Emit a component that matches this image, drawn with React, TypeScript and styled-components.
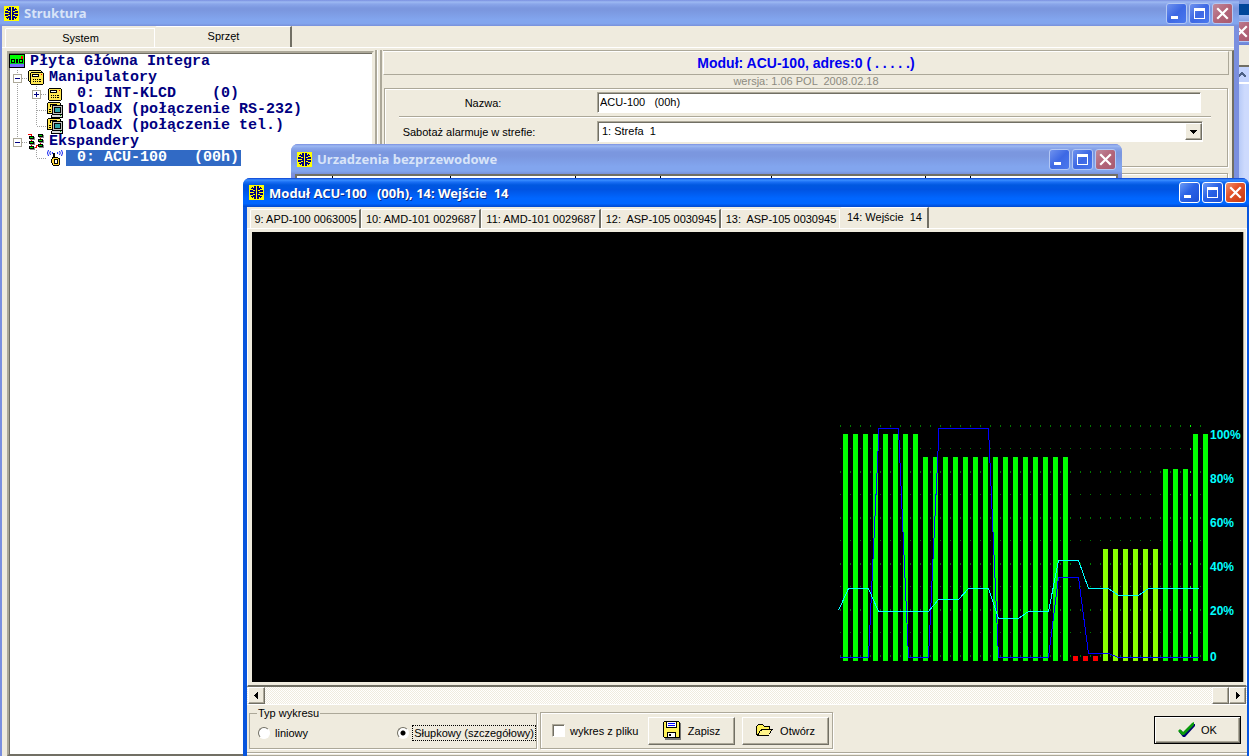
import React, { ReactNode, useState } from "react";
import styled, { createGlobalStyle, css } from "styled-components";

const face = "#efebde";
const shade = "#aca899";
const dark = "#716f64";
const ui = `"Liberation Sans", Arial, sans-serif`;

const GlobalStyle = createGlobalStyle`
  *, *::before, *::after { box-sizing: border-box; }
  html, body { margin: 0; height: 100%; }
  body { font: 11px/14px ${ui}; color: #000; background: #fff; overflow: hidden; }
  button, input, select { font: inherit; color: inherit; margin: 0; }
`;

const Desktop = styled.div`
  position: relative;
  min-height: 100vh;
  overflow: hidden;
  white-space: pre;
`;

type Tone = { $active?: boolean };

const Window = styled.section<Tone>`
  position: absolute;
  display: flex;
  flex-direction: column;
  background: ${(p) => (p.$active ? "#0855dd" : "#7a8fdf")};
  border-radius: 7px 7px 0 0;
  overflow: hidden;
`;

const BackWindow = styled(Window)`
  top: 0;
  right: -3px;
  bottom: 0;
  width: 240px;
  border-radius: 0;
`;

const StructureWindow = styled(Window)`
  top: 0;
  left: 0;
  right: 10px;
  bottom: 0;
  padding: 0 5px 0 2px;
  border-radius: 0;
`;

const WirelessWindow = styled(Window)`
  top: 144px;
  left: 291px;
  right: 127px;
  height: 60px;
  padding: 0 4px;
`;

const ModuleWindow = styled(Window)`
  top: 178px;
  left: 243px;
  right: 0;
  bottom: 0;
  padding: 0 2px 0 4px;
`;

const TitleBar = styled.header<Tone & { $height: number; $inset: number }>`
  flex: none;
  display: flex;
  align-items: center;
  gap: 5px;
  height: ${(p) => p.$height}px;
  margin: 0 -5px 0 -4px;
  padding: 2px ${(p) => p.$inset}px 2px 6px;
  background: ${(p) =>
    p.$active
      ? "linear-gradient(#0a3fd0 0, #3b8fff 2px, #1a6ff5 4px, #0058e0 7px, #0054e3 40%, #0066ff 70%, #0066ff 88%, #0048cf 100%)"
      : "linear-gradient(#7a8fe0 0, #9db9f2 2px, #8aa6ea 4px, #7b97df 8px, #7b97df 40%, #82a5ee 75%, #82a5ee 90%, #7890da 100%)"};
`;

const TitleText = styled.h1<Tone>`
  flex: 1;
  margin: 0;
  font: bold 13px/16px "Noto Sans", "Open Sans", sans-serif;
  color: ${(p) => (p.$active ? "#fff" : "#d8e4f8")};
  text-shadow: ${(p) => (p.$active ? "1px 1px 0 #0a2a8c" : "none")};
`;

const CaptionButtons = styled.div`
  display: flex;
  gap: 2px;
`;

const CaptionButton = styled.button<Tone & { $close?: boolean }>`
  display: block;
  width: 21px;
  height: 21px;
  padding: 0;
  border: 1px solid ${(p) => (p.$active ? "#fff" : "#b4c8f4")};
  border-radius: 3px;
  background: ${(p) =>
    p.$close
      ? p.$active
        ? "linear-gradient(135deg, #f0936f, #e4532a 40%, #c63a12)"
        : "linear-gradient(135deg, #c08a9c, #b36579 50%, #a85a70)"
      : p.$active
        ? "linear-gradient(135deg, #6c9bf5, #2a62e6 45%, #1c4fd6)"
        : "linear-gradient(135deg, #6f92ee, #3d68e4 50%, #4a78ee)"};
  svg { display: block; }
`;

const BackTop = styled.div`
  height: 15px;
  border-top: 4px solid #7b97df;
  background: #00469a;
`;

const BackTitle = styled.div`
  display: flex;
  justify-content: flex-end;
  align-items: center;
  height: 30px;
  padding-top: 2px;
  background: linear-gradient(#9db9f2, #7b97df 8px, #82a5ee 80%, #6a7fd4);
`;

const BackClient = styled.div`
  flex: 1;
  display: flex;
  flex-direction: column;
  align-items: flex-end;
  padding: 20px 3px 0 0;
  background: ${face};
`;

const BackScroll = styled.div`
  flex: 1;
  display: flex;
  flex-direction: column;
  width: 11px;
  border-top: 2px solid ${dark};
  background: linear-gradient(90deg, #b4c8f6, #cddafd 60%);
`;

const BackScrollButton = styled.button`
  height: 17px;
  padding: 0;
  border: 0;
  border-bottom: 2px solid #fff;
  background: #c3d3fd;
  svg { display: block; }
`;

const Client = styled.div`
  flex: 1;
  min-height: 0;
  display: flex;
  flex-direction: column;
  background: ${face};
`;

const Tabs = styled.div`
  flex: none;
  display: flex;
  align-items: flex-end;
  padding-left: 3px;
  height: 21px;
`;

const Tab = styled.button<Tone & { $width: number; $plain?: boolean }>`
  width: ${(p) => p.$width}px;
  height: 19px;
  padding: 0 1px 0 2px;
  border: 0;
  border-left: 1px solid #fff;
  border-top: 1px solid #fff;
  border-right: ${(p) => (p.$plain ? "1px solid #fff" : `2px solid ${dark}`)};
  border-radius: 2px 0 0 0;
  background: ${face};
  white-space: pre;
  ${(p) =>
    p.$active &&
    css`
      height: 21px;
      padding-bottom: 3px;
      border-left-color: ${face};
    `}
`;

const Split = styled.div`
  flex: 1;
  min-height: 0;
  display: flex;
  border-top: 1px solid #fff;
  padding: 3px 0 0 5px;
`;

const Tree = styled.ul`
  flex: 0 0 367px;
  margin: 0;
  padding: 1px 0 0;
  list-style: none;
  background: #fff;
  border: 2px solid ${dark};
  border-top-color: ${shade};
  border-left-color: ${shade};
  border-right-color: ${face};
  box-shadow: inset 1px 1px 0 ${dark};
`;

const TreeRow = styled.li`
  display: flex;
  height: 16px;
`;

const TreeLabel = styled.span<{ $selected?: boolean }>`
  margin-left: 3px;
  padding: 0 2px;
  font: bold 15px/16px "Liberation Mono", "Courier New", monospace;
  color: ${(p) => (p.$selected ? "#fff" : "#000080")};
  background: ${(p) => (p.$selected ? "#316ac5" : "transparent")};
`;

const Splitter = styled.div`
  flex: 0 0 7px;
  margin: -1px 1px 0;
  border-left: 2px solid ${shade};
  border-right: 2px solid ${shade};
  background: linear-gradient(90deg, #fff 1px, ${face} 1px);
`;

const Details = styled.div`
  flex: 1;
  min-width: 0;
  padding-right: 3px;
  border-top: 1px solid ${shade};
  border-right: 2px solid ${dark};
  margin-top: -1px;
`;

const ModuleHeading = styled.h2`
  margin: 0;
  height: 24px;
  border: 1px solid ${shade};
  border-top-color: #fff;
  border-left-color: #fff;
  text-align: center;
  font: bold 14px/23px ${ui};
  color: #0000f0;
`;

const Version = styled.p`
  margin: 0;
  height: 13px;
  text-align: center;
  line-height: 13px;
  color: #8c8a80;
`;

const Panel = styled.div`
  height: 79px;
  margin: 0 1px;
  padding: 3px 26px 0 14px;
  border: 1px solid ${shade};
  box-shadow: inset 1px 1px 0 #fff, 1px 1px 0 #fff;
`;

const NextPanel = styled(Panel)`
  margin-top: 6px;
`;

const Field = styled.div`
  display: flex;
  align-items: center;
`;

const FieldLabel = styled.label<{ $inset: number }>`
  flex: 0 0 198px;
  padding-right: ${(p) => p.$inset}px;
  text-align: center;
`;

const sunken = css`
  background: #fff;
  border: 1px solid #fff;
  border-top-color: ${shade};
  border-left-color: ${shade};
  border-radius: 0;
  box-shadow: inset 1px 1px 0 ${dark};
`;

const TextInput = styled.input`
  flex: 1;
  min-width: 0;
  height: 21px;
  padding: 0 2px 2px;
  ${sunken}
`;

const Rule = styled.hr`
  margin: 3px -10px 3px 0;
  height: 2px;
  border: 0;
  background: linear-gradient(${shade} 1px, #fff 1px);
`;

const SelectBox = styled.div`
  position: relative;
  flex: 1;
  margin-right: -2px;
`;

const Select = styled.select`
  display: block;
  width: 100%;
  height: 21px;
  padding: 0 4px 2px;
  appearance: none;
  ${sunken}
`;

const raised = css`
  background: ${face};
  border: 1px solid ${dark};
  border-top-color: #fff;
  border-left-color: #fff;
  border-radius: 0;
  box-shadow: inset -1px -1px 0 ${shade};
`;

const SelectArrow = styled.span`
  position: absolute;
  top: 2px;
  right: 1px;
  width: 17px;
  height: 17px;
  pointer-events: none;
  ${raised}
  svg { display: block; }
`;

const ColumnStrip = styled.div`
  flex: 1;
  display: flex;
  border: 2px solid ${dark};
  background: #fff;
`;

const Column = styled.div<{ $width: number }>`
  width: ${(p) => p.$width}px;
  border-right: 1px solid #000;
`;

const ChartPage = styled.div`
  flex: 1;
  min-height: 0;
  display: flex;
  padding: 3px 2px 3px 4px;
  border: 1px solid #fff;
  border-bottom: 2px solid ${dark};
`;

const ChartCanvas = styled.div`
  flex: 1;
  display: flex;
  justify-content: flex-end;
  align-items: flex-end;
  background: #000;
  border-right: 1px solid ${shade};
`;

const ScrollBar = styled.div`
  flex: none;
  display: flex;
  height: 18px;
  padding: 0 1px;
  border-bottom: 1px solid #fff;
  background: repeating-conic-gradient(#fff 0 25%, ${face} 0 50%) 0 0 / 2px 2px;
`;

const ScrollButton = styled.button`
  width: 17px;
  padding: 0;
  ${raised}
  svg { display: block; }
`;

const ScrollSpace = styled.div`
  flex: 1;
`;

const ScrollThumb = styled.div`
  width: 17px;
  ${raised}
`;

const Footer = styled.footer`
  flex: none;
  display: flex;
  align-items: flex-end;
  gap: 3px;
  height: 47px;
  padding: 0 6px 3px 2px;
`;

const FooterEdge = styled.div`
  flex: none;
  height: 4px;
  border: 1px solid ${shade};
  border-width: 1px 0;
  box-shadow: inset 0 1px 0 #fff;
`;

const ChartKind = styled.fieldset`
  display: flex;
  align-items: center;
  justify-content: space-between;
  width: 288px;
  height: 43px;
  margin: 0;
  padding: 0 0 3px 8px;
  border: 1px solid ${shade};
  box-shadow: 1px 1px 0 #fff;
  legend { padding: 0 1px; margin-left: -1px; }
`;

const FileGroup = styled.div`
  display: flex;
  align-items: center;
  width: 293px;
  height: 37px;
  padding: 0 3px 0 11px;
  border: 1px solid ${shade};
  box-shadow: 1px 1px 0 #fff, inset 1px 1px 0 #fff;
`;

const Choice = styled.label`
  display: flex;
  align-items: center;
  gap: 3px;
`;

const ChoiceText = styled.span<{ $focused?: boolean }>`
  padding: 0 1px;
  line-height: 14px;
  border: 1px dotted ${(p) => (p.$focused ? "#000" : "transparent")};
`;

const Radio = styled.input`
  appearance: none;
  width: 12px;
  height: 12px;
  border: 1px solid #fff;
  border-top-color: ${dark};
  border-left-color: ${dark};
  border-radius: 50%;
  background: #fff;
  &:checked { background: radial-gradient(circle, #000 2px, #fff 3px); }
`;

const CheckBox = styled.input`
  appearance: none;
  width: 13px;
  height: 13px;
  ${sunken}
  &:checked { background: #000; }
`;

const PushButton = styled.button<{ $default?: boolean }>`
  display: flex;
  align-items: center;
  justify-content: center;
  gap: 6px;
  width: 87px;
  height: 28px;
  padding: 0;
  ${raised}
  ${(p) =>
    p.$default &&
    css`
      border: 1px solid #000;
      box-shadow: inset 1px 1px 0 #fff, inset -1px -1px 0 ${dark}, inset -2px -2px 0 ${shade};
    `}
`;

const FileButtons = styled.div`
  display: flex;
  gap: 7px;
  margin-left: auto;
`;

const FooterSpace = styled.div`
  flex: 1;
`;

const ButtonSlot = styled.div`
  padding-bottom: 5px;
`;

/* ---------- drawings ---------- */

const Icon = ({ w = 16, h = 16, children }: { w?: number; h?: number; children: ReactNode }) => (
  <svg width={w} height={h} viewBox={`0 0 ${w} ${h}`} shapeRendering="crispEdges" aria-hidden="true">
    {children}
  </svg>
);

const AppIcon = () => (
  <Icon w={15} h={15}>
    <path fill="#ff0" d="M0 0h15v15H0z" />
    <path fill="#000080" d="M5 1h5v1h2v1h1v2h1v5h-1v2h-1v1h-2v1H5v-1H3v-1H2v-2H1V5h1V3h1V2h2z" />
    <path
      fill="#ff0"
      d="M7 0h1v15H7zM1 7h4v1H1zM10 7h4v1h-4zM2 4h2v1H2zM4 5h2v1H4zM11 4h2v1h-2zM9 5h2v1H9zM2 10h2v1H2zM4 9h2v1H4zM11 10h2v1h-2zM9 9h2v1H9zM4 2h1v1H4zM10 2h1v1h-1zM4 12h1v1H4zM10 12h1v1h-1z"
    />
  </Icon>
);

const MinimizeGlyph = () => (
  <Icon w={19} h={19}>
    <path fill="#fff" d="M4 12h7v3H4z" />
  </Icon>
);

const MaximizeGlyph = () => (
  <Icon w={19} h={19}>
    <path fill="#fff" fillRule="evenodd" d="M4 4h11v11H4zM5 7h9v7H5z" />
  </Icon>
);

const CloseGlyph = () => (
  <svg width="19" height="19" viewBox="0 0 19 19" aria-hidden="true">
    <path d="M5 5l9 9M14 5l-9 9" stroke="#fff" strokeWidth="2.2" strokeLinecap="square" />
  </svg>
);

const BoardIcon = () => (
  <Icon>
    <path fill="#000" d="M0 0h16v14H0z" />
    <path fill="#0f0" d="M1 1h14v8H1z" />
    <path fill="#0c2" d="M1 9h14v1H1z" />
    <path fill="#f00" d="M12 2h2v3h-2z" />
    <path fill="#000" fillRule="evenodd" d="M2 5h4v4H2zM3 6v2h2V6zM7 5h2v4H7zM8 6v2h0zM10 5h4v4h-4zM11 6v2h2V6z" />
    <path fill="#7a6cff" d="M1 10h14v3H1z" />
  </Icon>
);

const Keypad = ({ x, y }: { x: number; y: number }) => (
  <g transform={`translate(${x} ${y})`}>
    <path fill="#000" d="M1 0h12v1h1v11h-1v1H1v-1H0V1h1z" />
    <path fill="#ffe650" d="M1 1h12v11H1z" />
    <path fill="#000" fillRule="evenodd" d="M2 2h7v3H2zM3 3v1h5V3z" />
    <path fill="#fff" d="M3 3h5v1H3z" />
    <path fill="#000" d="M3 7h1v1H3zM5 7h1v1H5zM7 7h1v1H7zM3 9h1v1H3zM5 9h1v1H5zM7 9h1v1H7zM9 7h2v1H9zM9 9h2v1H9z" />
    <path fill="#f00" d="M11 2h1v1h-1z" />
  </g>
);

const KeypadIcon = () => (
  <Icon>
    <Keypad x={1} y={2} />
  </Icon>
);

const KeypadsIcon = () => (
  <Icon>
    <path fill="#000" d="M1 0h12v1h1v11H1v-1H0V1h1z" />
    <path fill="#fff27a" d="M1 1h12v10H1z" />
    <Keypad x={2} y={2} />
  </Icon>
);

const DloadIcon = () => (
  <Icon>
    <path fill="#000" d="M1 0h12v1h1v11H0V1h1z" />
    <path fill="#ffe650" d="M1 1h12v10H1z" />
    <path fill="#000" d="M3 2h7v1H3zM3 3h1v2H3zM2 7h2v1H2zM2 9h2v1H2z" />
    <path fill="#000" d="M5 3h11v10H5z" />
    <path fill="#c0c0c0" d="M6 4h9v8H6z" />
    <path fill="#000" d="M7 5h7v6H7z" />
    <path fill="#2fa3a8" d="M8 6h5v4H8z" />
    <path fill="#000" d="M4 13h12v3H4z" />
    <path fill="#d8d8d8" d="M5 13h10v2H5z" />
    <path fill="#0a0" d="M13 13h1v1h-1z" />
  </Icon>
);

const ExpandersIcon = () => (
  <Icon>
    <path fill="none" stroke="#e00" d="M0 .5h4M3.500 0v15M4 13.500h5M8.500 11v3M8 11.500h5M12.500 0v12" />
    {[
      [1, 2],
      [1, 7],
      [1, 12],
      [10, 0],
      [10, 5],
      [10, 10],
    ].map(([x, y]) => (
      <g key={`${x}-${y}`} transform={`translate(${x} ${y})`}>
        <path fill="#888" d="M1 1h5v3H1z" />
        <path fill="#000" d="M0 0h5v3H0z" />
        <path fill="#0d0" d="M1 1h3v1H1z" />
      </g>
    ))}
  </Icon>
);

const RadioIcon = () => (
  <svg width="16" height="16" viewBox="0 0 16 16" aria-hidden="true">
    <path
      fill="none"
      stroke="#1020f0"
      d="M1.500 0Q-.5 3 1.500 6M3.500 1Q2 3 3.500 5M5.500 2Q5 3 5.500 4M14.500 0Q16.500 3 14.500 6M12.500 1Q14 3 12.500 5M10.500 2Q11 3 10.500 4"
    />
    <g shapeRendering="crispEdges">
      <path fill="#000" d="M6 3h2v4h3v1h2v7h-1v1H6v-1H5v-2H4V9h1V7h1z" />
      <path fill="#ffd83c" d="M6 8h5v1h1v6H6v-2H5V9h1z" />
      <path fill="#000" d="M7 9h4v5H7z" />
      <path fill="#fff" d="M8 10h2v3H8z" />
    </g>
  </svg>
);

const FloppyIcon = () => (
  <Icon w={19} h={19}>
    <path fill="#777" d="M2 2h16v17H2z" />
    <path fill="#000" d="M1 0h15v1h1v16H1v-1H0V1h1z" />
    <path fill="#fff25a" d="M1 1h15v15H1z" />
    <path fill="#000" d="M3 1h11v6H3z" />
    <path fill="#fff" d="M4 1h9v5H4z" />
    <path fill="#00f" d="M5 2h7v1H5zM5 4h7v1H5z" />
    <path fill="#000" d="M4 11h9v5H4z" />
    <path fill="#fff" d="M5 12h7v4H5z" />
    <path fill="#000" d="M6 13h2v2H6z" />
  </Icon>
);

const FolderIcon = () => (
  <Icon w={18} h={13}>
    <path fill="#000" d="M2 0h5v1h1v1h6v3h3v1h-1v1h-1v2h-1v1h-1v2H1v-1H0V2h1V1h1z" />
    <path fill="#fff25a" d="M2 1h5v1h1v1h5v2H5v1H4v1H3v2H2v1H1V2h1z" />
    <path fill="#fff48a" d="M6 6h9v1h-1v2h-1v2H3V9h1V7h2z" />
  </Icon>
);

const CheckIcon = () => (
  <svg width="17" height="16" viewBox="0 0 17 16" aria-hidden="true">
    <path fill="#000070" d="M1 10l2-2 3 3L15 2l2 0v2L7 15H5z" />
    <path fill="#0a9a0a" d="M0 9l2-2 3 3L14 1l2-1v3L6 13H4z" />
  </svg>
);

const Arrow = ({ path }: { path: string }) => (
  <Icon w={15} h={15}>
    <path d={path} />
  </Icon>
);

type Branch = "blank" | "line" | "tee" | "end" | "minus" | "minusEnd" | "plus";

const BranchCell = ({ kind }: { kind: Branch }) => {
  const box = kind === "minus" || kind === "minusEnd" || kind === "plus";
  const down = kind === "end" || kind === "minusEnd" ? 8 : 16;
  return (
    <Icon w={19} h={16}>
      {kind !== "blank" && <path stroke="#a0a0a0" strokeDasharray="1 1" d={`M8.500 0v${down}`} />}
      {kind !== "blank" && kind !== "line" && <path stroke="#a0a0a0" strokeDasharray="1 1" d="M9 8.500h10" />}
      {box && <path fill="#fff" stroke="#aca899" d="M4.500 4.500h8v8h-8z" />}
      {box && <path stroke="#000080" d="M6 8.500h5" />}
      {kind === "plus" && <path stroke="#000080" d="M8.500 6v5" />}
    </Icon>
  );
};

/* ---------- chart ---------- */

const bars = [
  ...Array(8).fill([24, "#0f0"]),
  ...Array(15).fill([47, "#0f0"]),
  ...Array(3).fill([246, "#f00"]),
  ...Array(6).fill([139, "#8f0"]),
  ...Array(3).fill([59, "#0f0"]),
  ...Array(2).fill([24, "#0f0"]),
] as [number, string][];

const noiseLine =
  "9,247 38,247 48,30 48,18 68,18 78,247 98,247 108,30 108,18 158,18 168,247 218,247 228,167 248,167 258,243 278,243 288,247 368,247";
const levelLine =
  "8,200 18,178 38,178 48,201 98,201 108,189 128,189 138,178 158,178 168,208 188,208 198,201 218,201 228,150 248,150 258,178 278,178 288,185 308,185 318,178 368,178";

const scale: [string, number][] = [
  ["100%", 29],
  ["80%", 73],
  ["60%", 117],
  ["40%", 161],
  ["20%", 205],
  ["0", 251],
];

const ScaleText = styled.text`
  font: bold 12px ${ui};
  fill: #0ff;
`;

const SignalChart = () => (
  <svg width="413" height="272" viewBox="0 0 413 272" role="img" aria-label="Wykres">
    <g shapeRendering="crispEdges">
      {Array.from({ length: 11 }, (_, row) =>
        Array.from({ length: 37 }, (_, col) => (
          <rect
            key={`${row}-${col}`}
            x={10 + col * 10}
            y={15 + row * 23}
            width="1"
            height={row % 2 && col !== 35 ? 1 : 2}
            fill={col === 35 ? "#0f0" : "#007800"}
          />
        ))
      )}
      {bars.map(([top, color], i) => (
        <rect key={i} x={13 + i * 10} y={top} width="5" height={251 - top} fill={color} />
      ))}
      <g transform="translate(.5 .5)" fill="none">
        <polyline points={noiseLine} stroke="#00f" />
        <polyline points={levelLine} stroke="#0ff" />
      </g>
    </g>
    {scale.map(([label, y]) => (
      <ScaleText key={label} x="380" y={y}>
        {label}
      </ScaleText>
    ))}
  </svg>
);

/* ---------- data ---------- */

const tree: { branches: Branch[]; icon: ReactNode; text: string; selected?: boolean }[] = [
  { branches: [], icon: <BoardIcon />, text: "Płyta Główna Integra" },
  { branches: ["minus"], icon: <KeypadsIcon />, text: "Manipulatory" },
  { branches: ["line", "plus"], icon: <KeypadIcon />, text: " 0: INT-KLCD    (0)" },
  { branches: ["line", "tee"], icon: <DloadIcon />, text: "DloadX (połączenie RS-232)" },
  { branches: ["line", "end"], icon: <DloadIcon />, text: "DloadX (połączenie tel.)" },
  { branches: ["minusEnd"], icon: <ExpandersIcon />, text: "Ekspandery" },
  { branches: ["blank", "end"], icon: <RadioIcon />, text: " 0: ACU-100   (00h)", selected: true },
];

const moduleTabs: [string, number][] = [
  ["9: APD-100 0063005", 111],
  ["10: AMD-101 0029687", 120],
  ["11: AMD-101 0029687", 120],
  ["12:  ASP-105 0030945", 120],
  ["13:  ASP-105 0030945", 119],
  ["14: Wejście  14", 89],
];

const Title = ({ text, active, height, inset }: { text: string; active?: boolean; height: number; inset: number }) => (
  <TitleBar $active={active} $height={height} $inset={inset}>
    <AppIcon />
    <TitleText $active={active}>{text}</TitleText>
    <CaptionButtons>
      <CaptionButton $active={active} aria-label="Minimalizuj">
        <MinimizeGlyph />
      </CaptionButton>
      <CaptionButton $active={active} aria-label="Maksymalizuj">
        <MaximizeGlyph />
      </CaptionButton>
      <CaptionButton $active={active} $close aria-label="Zamknij">
        <CloseGlyph />
      </CaptionButton>
    </CaptionButtons>
  </TitleBar>
);

export default function App() {
  const [kind, setKind] = useState("bar");
  const [name, setName] = useState("ACU-100   (00h)");

  return (
    <Desktop>
      <GlobalStyle />
      <BackWindow>
        <BackTop />
        <BackTitle>
          <CaptionButton $close aria-label="Zamknij">
            <CloseGlyph />
          </CaptionButton>
        </BackTitle>
        <BackClient>
          <BackScroll>
            <BackScrollButton aria-label="W górę">
              <Icon w={11} h={15}>
                <path fill="none" stroke="#4d6185" strokeWidth="2" d="M0 10l4-4 4 4" />
              </Icon>
            </BackScrollButton>
          </BackScroll>
        </BackClient>
      </BackWindow>

      <StructureWindow>
        <Title text="Struktura" height={26} inset={6} />
        <Client>
          <Tabs>
            <Tab $width={150} $plain>System</Tab>
            <Tab $width={137} $active>Sprzęt</Tab>
          </Tabs>
          <Split>
            <Tree>
              {tree.map((row) => (
                <TreeRow key={row.text}>
                  {row.branches.map((b, i) => (
                    <BranchCell key={i} kind={b} />
                  ))}
                  {row.icon}
                  <TreeLabel $selected={row.selected}>{row.text}</TreeLabel>
                </TreeRow>
              ))}
            </Tree>
            <Splitter />
            <Details>
              <ModuleHeading>Moduł: ACU-100, adres:0 ( . . . . .)</ModuleHeading>
              <Version>wersja: 1.06 POL  2008.02.18</Version>
              <Panel>
                <Field>
                  <FieldLabel htmlFor="module-name" $inset={30}>Nazwa:</FieldLabel>
                  <TextInput id="module-name" value={name} onChange={(e) => setName(e.target.value)} />
                </Field>
                <Rule />
                <Field>
                  <FieldLabel htmlFor="tamper-zone" $inset={58}>Sabotaż alarmuje w strefie:</FieldLabel>
                  <SelectBox>
                    <Select id="tamper-zone">
                      <option>1: Strefa{"\u00a0\u00a0"}1</option>
                    </Select>
                    <SelectArrow>
                      <Arrow path="M4 6h7v1h-1v1H9v1H8v1H7V9H6V8H5V7H4z" />
                    </SelectArrow>
                  </SelectBox>
                </Field>
              </Panel>
              <NextPanel />
            </Details>
          </Split>
        </Client>
      </StructureWindow>

      <WirelessWindow>
        <Title text="Urzadzenia bezprzewodowe" height={30} inset={7} />
        <ColumnStrip>
          {[36, 118, 125, 85, 111, 154, 45].map((w) => (
            <Column key={w} $width={w} />
          ))}
        </ColumnStrip>
      </WirelessWindow>

      <ModuleWindow $active>
        <Title active text="Moduł ACU-100   (00h), 14: Wejście  14" height={29} inset={6} />
        <Client>
          <Tabs>
            {moduleTabs.map(([label, width], i) => (
              <Tab key={label} $width={width} $active={i === 5} $plain={i === 4}>
                {label}
              </Tab>
            ))}
          </Tabs>
          <ChartPage>
            <ChartCanvas>
              <SignalChart />
            </ChartCanvas>
          </ChartPage>
          <ScrollBar>
            <ScrollButton aria-label="W lewo">
              <Arrow path="M9 4v7H8v-1H7V9H6V8H5V7h1V6h1V5h1V4z" />
            </ScrollButton>
            <ScrollSpace />
            <ScrollThumb />
            <ScrollButton aria-label="W prawo">
              <Arrow path="M6 4v7h1v-1h1V9h1V8h1V7H9V6H8V5H7V4z" />
            </ScrollButton>
          </ScrollBar>
          <Footer>
            <ChartKind>
              <legend>Typ wykresu</legend>
              <Choice>
                <Radio type="radio" name="kind" checked={kind === "line"} onChange={() => setKind("line")} />
                <ChoiceText>liniowy</ChoiceText>
              </Choice>
              <Choice>
                <Radio type="radio" name="kind" checked={kind === "bar"} onChange={() => setKind("bar")} />
                <ChoiceText $focused>Słupkowy (szczegółowy)</ChoiceText>
              </Choice>
            </ChartKind>
            <FileGroup>
              <Choice>
                <CheckBox type="checkbox" />
                <ChoiceText>wykres z pliku</ChoiceText>
              </Choice>
              <FileButtons>
                <PushButton>
                  <FloppyIcon />
                  Zapisz
                </PushButton>
                <PushButton>
                  <FolderIcon />
                  Otwórz
                </PushButton>
              </FileButtons>
            </FileGroup>
            <FooterSpace />
            <ButtonSlot>
              <PushButton $default>
                <CheckIcon />
                OK
              </PushButton>
            </ButtonSlot>
          </Footer>
          <FooterEdge />
        </Client>
      </ModuleWindow>
    </Desktop>
  );
}
